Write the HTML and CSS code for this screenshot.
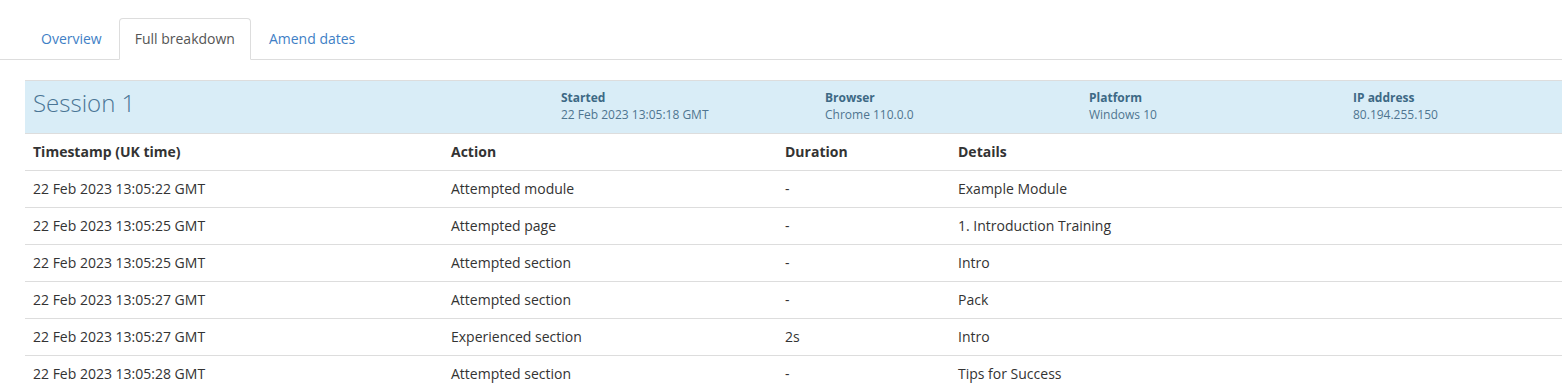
FILE: index.html
```html
<!DOCTYPE html>
<html lang="en">
<head>
  <meta charset="UTF-8" />
  <meta name="viewport" content="width=device-width, initial-scale=1" />
  <title>Full breakdown</title>
  <link rel="stylesheet" href="styles.css">
</head>
<body>

  <ul class="tabs">
    <li><a href="#">Overview</a></li>
    <li class="active"><a href="#">Full breakdown</a></li>
    <li><a href="#">Amend dates</a></li>
  </ul>

  <div class="content">
    <div class="session">
      <div class="session-title">Session 1</div>
      <div class="meta">
        <div class="meta-label">Started</div>
        <div class="meta-value">22 Feb 2023 13:05:18 GMT</div>
      </div>
      <div class="meta">
        <div class="meta-label">Browser</div>
        <div class="meta-value">Chrome 110.0.0</div>
      </div>
      <div class="meta">
        <div class="meta-label">Platform</div>
        <div class="meta-value">Windows 10</div>
      </div>
      <div class="meta">
        <div class="meta-label">IP address</div>
        <div class="meta-value">80.194.255.150</div>
      </div>
    </div>

    <table class="log">
      <thead>
        <tr>
          <th class="col-time">Timestamp (UK time)</th>
          <th class="col-action">Action</th>
          <th class="col-duration">Duration</th>
          <th>Details</th>
        </tr>
      </thead>
      <tbody>
        <tr><td>22 Feb 2023 13:05:22 GMT</td><td>Attempted module</td><td>-</td><td>Example Module</td></tr>
        <tr><td>22 Feb 2023 13:05:25 GMT</td><td>Attempted page</td><td>-</td><td>1. Introduction Training</td></tr>
        <tr><td>22 Feb 2023 13:05:25 GMT</td><td>Attempted section</td><td>-</td><td>Intro</td></tr>
        <tr><td>22 Feb 2023 13:05:27 GMT</td><td>Attempted section</td><td>-</td><td>Pack</td></tr>
        <tr><td>22 Feb 2023 13:05:27 GMT</td><td>Experienced section</td><td>2s</td><td>Intro</td></tr>
        <tr><td>22 Feb 2023 13:05:28 GMT</td><td>Attempted section</td><td>-</td><td>Tips for Success</td></tr>
      </tbody>
    </table>
  </div>

</body>
</html>
```

FILE: styles.css
```css
body {
  font-family: "Open Sans", "Liberation Sans", sans-serif;
  font-size: 14px;
  line-height: 20px;
  color: #333;
  background: #fff;
  margin: 0;
  padding-top: 18px;
  overflow: hidden;
}

.tabs {
  list-style: none;
  margin: 0;
  padding: 0 0 0 25px;
  display: flex;
  border-bottom: 1px solid #ddd;
}

.tabs li {
  margin-right: 2px;
  margin-bottom: -1px;
}

.tabs li:first-child {
  margin-right: 1px;
}

.tabs a {
  display: block;
  padding: 10px 15px;
  border: 1px solid transparent;
  border-radius: 4px 4px 0 0;
  color: #3f7fc6;
  text-decoration: none;
}

.tabs .active a {
  color: #555;
  background: #fff;
  border-color: #ddd #ddd transparent;
}

.content {
  padding: 20px 0 0 25px;
}

.session {
  display: grid;
  grid-template-columns: 528px repeat(4, 264px);
  background: #d9edf7;
  border-top: 1px solid #ddd;
  border-bottom: 1px solid #ddd;
  height: 54px;
  box-sizing: border-box;
  overflow: hidden;
  align-items: start;
}

.session-title {
  padding: 7px 0 0 8px;
  font-size: 24px;
  font-weight: 300;
  color: #4a7595;
  line-height: 30px;
}

.meta {
  padding: 8px 0 0 8px;
  font-size: 12px;
  line-height: 17px;
  color: #4f7590;
}

.meta-label {
  font-weight: 700;
  color: #3d6985;
}

.log {
  width: 100%;
  border-collapse: collapse;
}

.log th,
.log td {
  text-align: left;
  padding: 8px;
  vertical-align: top;
}

.log th {
  font-weight: 700;
}

.log td {
  border-top: 1px solid #ddd;
}

.col-time {
  width: 402px;
}

.col-action {
  width: 318px;
}

.col-duration {
  width: 157px;
}
```
